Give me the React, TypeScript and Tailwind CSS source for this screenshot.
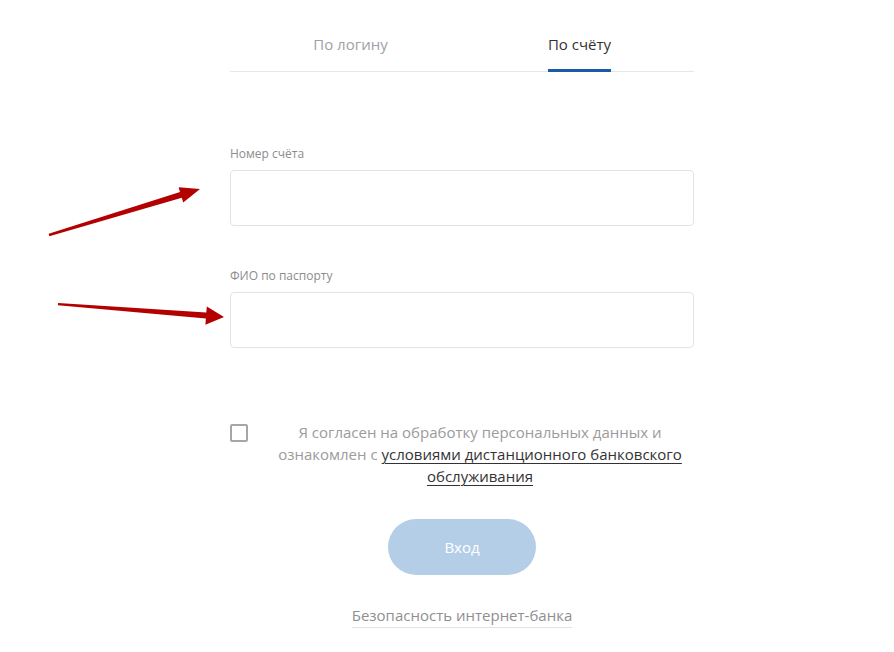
import React from "react";

export default function App() {
  return (
    <div
      className="relative w-[894px] h-[652px] bg-white overflow-hidden"
      style={{ fontFamily: '"Open Sans", "Noto Sans", sans-serif' }}
    >
      <div className="ml-[230px] w-[464px] flex flex-col">
        {/* Tabs */}
        <div className="flex pl-[6px] border-b border-[#e6e6e6]">
          <div className="flex-1 flex justify-center">
            <span className="pt-[32px] pb-[15px] text-[15px] leading-[24px] text-[#9ea2a6]">
              По логину
            </span>
          </div>
          <div className="flex-1 flex justify-center">
            <span className="pt-[32px] pb-[13px] -mb-px border-b-[3px] border-[#1a5ba6] text-[15px] leading-[24px] text-[#333]">
              По счёту
            </span>
          </div>
        </div>

        {/* Account number */}
        <label className="mt-[74px] mb-[8px] text-[12px] leading-[16px] text-[#8c8c8c]">
          Номер счёта
        </label>
        <input
          type="text"
          className="h-[56px] w-full rounded-[4px] border border-[#e3e3e3] bg-white outline-none"
        />

        {/* Full name */}
        <label className="mt-[42px] mb-[8px] text-[12px] leading-[16px] text-[#8c8c8c]">
          ФИО по паспорту
        </label>
        <input
          type="text"
          className="h-[56px] w-full rounded-[4px] border border-[#e3e3e3] bg-white outline-none"
        />

        {/* Agreement */}
        <div className="mt-[73px] flex items-start gap-[18px]">
          <div className="mt-[3px] w-[18px] h-[18px] shrink-0 rounded-[2px] border-2 border-[#a3a7ab]" />
          <p className="flex-1 text-center text-[15px] leading-[22px] text-[#9b9b9b]">
            Я согласен на обработку персональных данных и ознакомлен с{" "}
            <a className="text-[#333] underline underline-offset-[3px] decoration-1">
              условиями дистанционного банковского обслуживания
            </a>
          </p>
        </div>

        {/* Button */}
        <div className="mt-[32px] flex justify-center">
          <button className="w-[148px] h-[56px] rounded-full bg-[#b5cee8] text-white text-[15px]">
            Вход
          </button>
        </div>

        {/* Security link */}
        <div className="mt-[29px] flex justify-center">
          <span className="text-[15px] leading-[22px] pb-[1px] text-[#8f8f8f] border-b border-[#e3e3e3]">
            Безопасность интернет-банка
          </span>
        </div>
      </div>

      {/* Annotation arrows */}
      <svg
        className="absolute left-0 top-0 pointer-events-none"
        width="894"
        height="652"
        viewBox="0 0 894 652"
      >
        <polygon
          fill="#b30000"
          points="49.3,236.2 48.7,233.8 180,191.9 178.6,187.2 200,189 183.2,202.4 181.8,197.7"
        />
        <polygon
          fill="#b30000"
          points="58.1,303 57.9,305.2 205.9,318.6 205.4,324.8 224,317 206.8,306.4 206.3,312.6"
        />
      </svg>
    </div>
  );
}
